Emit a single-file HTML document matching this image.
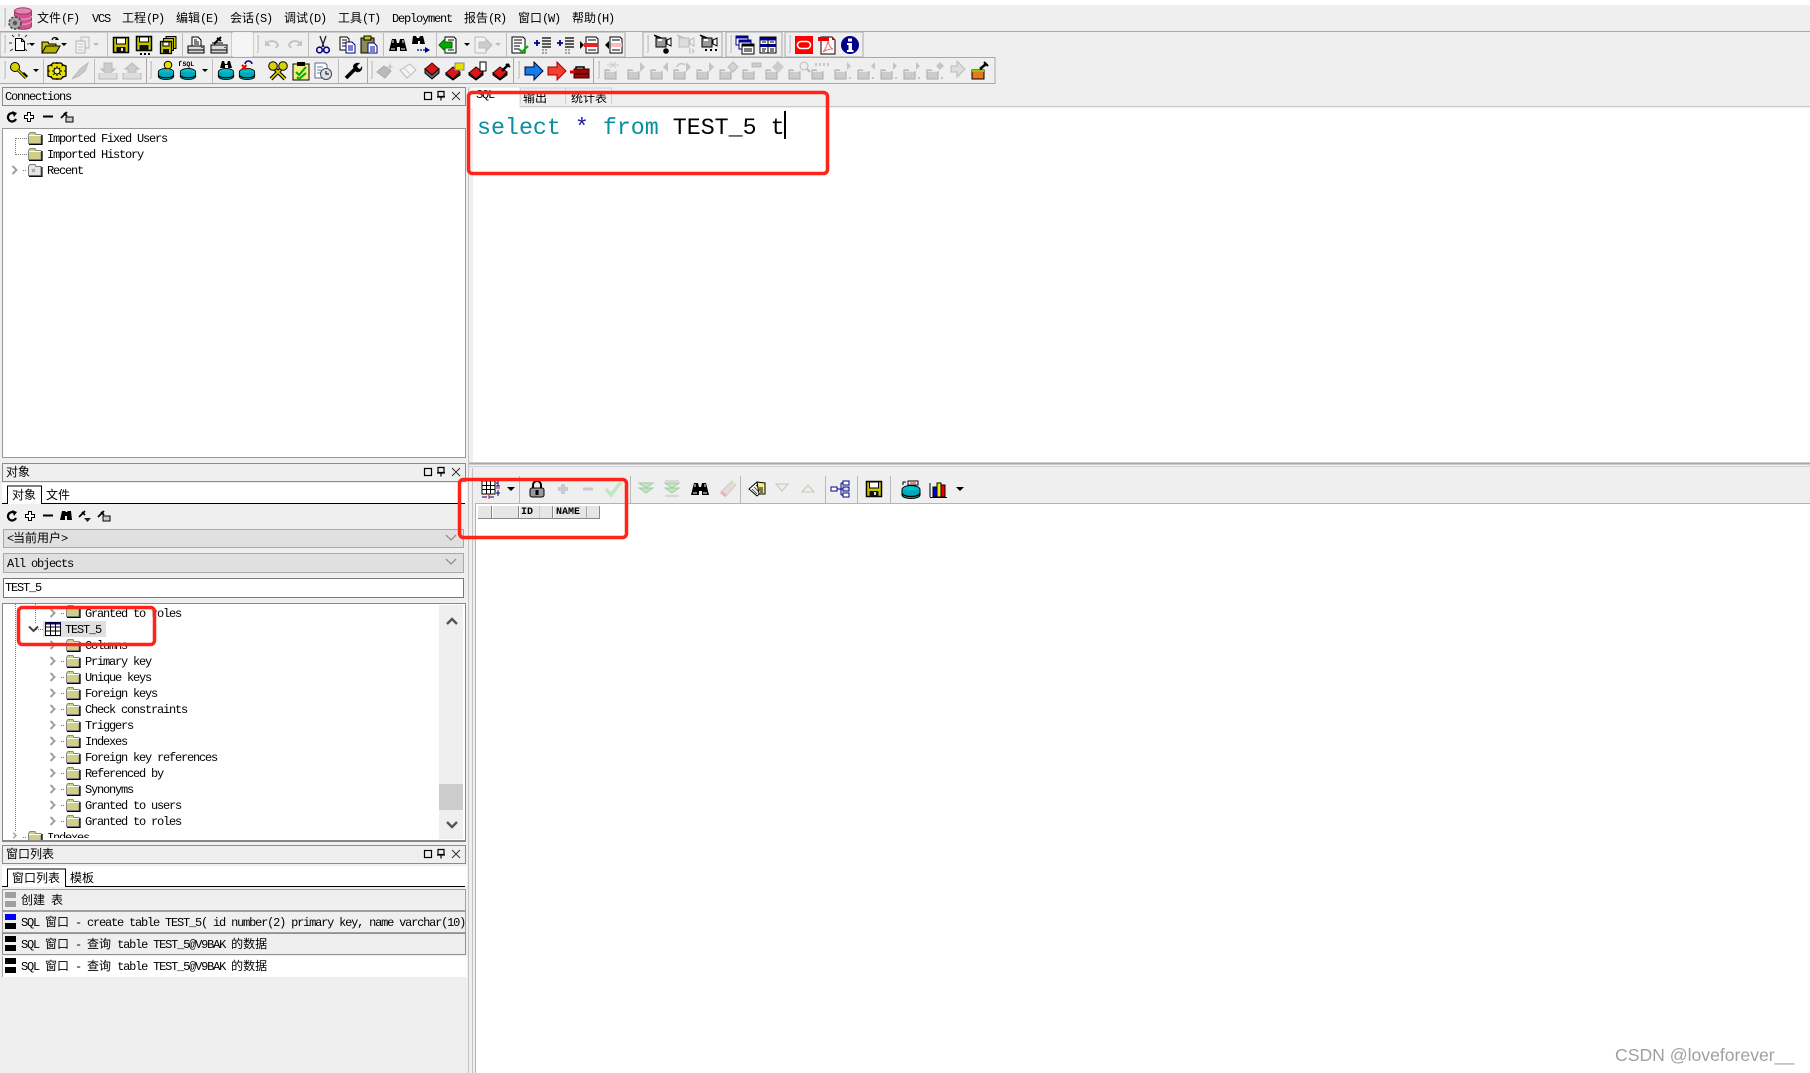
<!DOCTYPE html>
<html lang="zh"><head><meta charset="utf-8"><title>PL/SQL Developer</title>
<style>
html,body{margin:0;padding:0;background:#efefef}
#p{position:relative;width:1810px;height:1073px;overflow:hidden;background:#efefef}
svg.l{position:absolute;left:0;top:0}
.t{position:absolute;font:12px/14px "Liberation Mono","WenQuanYi Zen Hei",monospace;letter-spacing:-1.2px;white-space:pre;color:#000}
.t i{font-style:normal;letter-spacing:0}
#clip1{position:absolute;left:3px;top:604px;width:436px;height:234px;overflow:hidden}
#clip1 .t{margin-left:-3px;margin-top:-604px}
#ed{position:absolute;left:477px;top:113px;font:23.3px/30px "Liberation Mono",monospace;white-space:pre;color:#000}
#wm{position:absolute;left:1615px;top:1044px;font:17.6px/22px "Liberation Sans",sans-serif;color:#a0a0a0;white-space:pre}
</style></head><body><div id="p">
<svg class="l" width="1810" height="1073" viewBox="0 0 1810 1073" xmlns="http://www.w3.org/2000/svg">
<defs>
<symbol id="fo" viewBox="0 0 16 14"><path d="M1.500 3.500L3 1.500H8L9 3.500H14V12.500H1.500z" fill="#cfcf88" stroke="#888"/><path d="M2 4.500H14" stroke="#fff"/><path d="M15 4V13.500H2" fill="none" stroke="#000" stroke-width="1.300"/></symbol>
<symbol id="fr" viewBox="0 0 16 14"><path d="M1.500 3.500L3 1.500H8L9 3.500H14V12.500H1.500z" fill="#e6e6e6" stroke="#777"/><path d="M15 4V13.500H2" fill="none" stroke="#111" stroke-width="1.200"/><path d="M5 6l3 3M8 6l-3 3" stroke="#999"/></symbol>
<symbol id="ch" viewBox="0 0 10 10"><path d="M2.500 1l4 4-4 4" fill="none" stroke="#a0a0a0" stroke-width="2"/></symbol>
<symbol id="new" viewBox="0 0 20 20"><path d="M6.500 4.500h6l3 3v9h-9z" fill="#fff" stroke="#000"/><path d="M12.500 4.500v3h3" fill="none" stroke="#000"/><path d="M3 1l2 2M10 0v2.500M18 1l-2 2M0 9h3M1 17l3-2M18 10h2M18 17l-2-2" stroke="#333"/></symbol>
<symbol id="open" viewBox="0 0 20 20"><path d="M1 7h6l1 2h7v9H1z" fill="#c8c400" stroke="#000"/><path d="M1 18l4-7h14l-4 7z" fill="#b6b000" stroke="#000"/><path d="M11 5c1-3 4-3 5-1" fill="none" stroke="#000" stroke-width="1.300"/><path d="M14 5h4l-2-3z" fill="#000"/></symbol>
<symbol id="dcg" viewBox="0 0 20 20"><path d="M8 2h8v11H8z" fill="#eee" stroke="#bbb"/><path d="M3 6h9v12H3z" fill="#f2f2f2" stroke="#b4b4b4"/><path d="M5 9h5M5 12h5M5 15h5" stroke="#c4c4c4"/></symbol>
<symbol id="save" viewBox="0 0 20 20"><rect x="2.500" y="2.500" width="15" height="15" fill="#c8c400" stroke="#000" stroke-width="1.500"/><rect x="5.500" y="3" width="9" height="6" fill="#fff" stroke="#000"/><rect x="5.500" y="12" width="9" height="5.500" fill="#111"/><rect x="10" y="13" width="2" height="3" fill="#ddd"/></symbol>
<symbol id="saved" viewBox="0 0 20 20"><rect x="2.500" y="1.500" width="15" height="14" fill="#c8c400" stroke="#000" stroke-width="1.500"/><rect x="5.500" y="2" width="9" height="5" fill="#fff" stroke="#000"/><rect x="5.500" y="10" width="9" height="5.500" fill="#111"/><path d="M6 18h2v2H6zM10 18h2v2h-2zM14 18h2v2h-2z" fill="#000"/></symbol>
<symbol id="savea" viewBox="0 0 20 20"><rect x="8" y="1.500" width="10" height="12" fill="#c8c400" stroke="#000"/><rect x="5.500" y="3.500" width="10" height="12" fill="#c8c400" stroke="#000"/><rect x="2.500" y="6.500" width="11" height="12" fill="#c8c400" stroke="#000" stroke-width="1.300"/><rect x="5" y="7" width="6" height="4" fill="#fff" stroke="#000"/><rect x="5" y="14" width="6" height="4.500" fill="#111"/></symbol>
<symbol id="pr" viewBox="0 0 20 20"><path d="M6 2h6l3 3v6H6z" fill="#fff" stroke="#000"/><path d="M8 5h3M8 7h5M8 9h5" stroke="#000"/><path d="M2 11h16v7H2z" fill="#d8d8d8" stroke="#000"/><path d="M2 15h16" stroke="#000"/><path d="M15 12.500h2" stroke="#d22"/></symbol>
<symbol id="pr2" viewBox="0 0 20 20"><path d="M5 9l7-7M8 3l4 3" stroke="#000" stroke-width="2"/><path d="M2 10h16v8H2z" fill="#d8d8d8" stroke="#000"/><path d="M2 15h16" stroke="#000"/><path d="M15 12.500h2" stroke="#d22"/><path d="M3 8h11" stroke="#000"/></symbol>
<symbol id="undo" viewBox="0 0 20 20"><path d="M4 9c3-4 10-4 12 1l-2 3" fill="none" stroke="#c4c4c4" stroke-width="2"/><path d="M3 5v6h6z" fill="#c4c4c4"/></symbol>
<symbol id="redo" viewBox="0 0 20 20"><path d="M16 9c-3-4-10-4-12 1l2 3" fill="none" stroke="#c4c4c4" stroke-width="2"/><path d="M17 5v6h-6z" fill="#c4c4c4"/></symbol>
<symbol id="cut" viewBox="0 0 20 20"><path d="M7 1l4 11M13 1L9 12" stroke="#222" stroke-width="1.300"/><circle cx="6.500" cy="15" r="2.800" fill="none" stroke="#008" stroke-width="1.600"/><circle cx="13.500" cy="15" r="2.800" fill="none" stroke="#008" stroke-width="1.600"/></symbol>
<symbol id="copy" viewBox="0 0 20 20"><path d="M3 2h7l2 2v11H3z" fill="#fff" stroke="#000"/><path d="M5 5h5M5 8h5M5 11h5" stroke="#000"/><path d="M9 7h6l3 3v8H9z" fill="#fff" stroke="#008"/><path d="M11 11h5M11 13h5M11 15h5" stroke="#008"/></symbol>
<symbol id="paste" viewBox="0 0 20 20"><rect x="2" y="3" width="13" height="15" fill="#8a8a5a" stroke="#000"/><rect x="5" y="1" width="7" height="4" fill="#c8c800" stroke="#000"/><path d="M9 8h6l3 3v7H9z" fill="#fff" stroke="#008"/><path d="M11 12h5M11 14h5M11 16h5" stroke="#008"/></symbol>
<symbol id="bino" viewBox="0 0 20 20"><path d="M4 4h4l1 4h2l1-4h4l3 12h-7v-4H9v4H1z" fill="#000"/><path d="M3 14h4M13 14h4M5 5v3M15 5v3" stroke="#fff"/></symbol>
<symbol id="findn" viewBox="0 0 20 20"><path d="M2 1h3l1 2h2l1-2h3l2 8H9V6H7v3H1z" fill="#000"/><path d="M6 15h9" stroke="#008" stroke-dasharray="2 1" stroke-width="1.300"/><path d="M14 12l5 3-5 3z" fill="#008"/></symbol>
<symbol id="back" viewBox="0 0 20 20"><path d="M7 2h9l2 2v14H7z" fill="#fff" stroke="#000"/><path d="M10 5h6M10 15h6" stroke="#000"/><path d="M1 10l6-6v3h7v6H7v3z" fill="#0a0" stroke="#060"/></symbol>
<symbol id="fwd" viewBox="0 0 20 20"><path d="M2 2h9l2 2v14H2z" fill="#f2f2f2" stroke="#bbb"/><path d="M19 10l-6-6v3H6v6h7v3z" fill="#ccc" stroke="#bbb"/></symbol>
<symbol id="dchk" viewBox="0 0 20 20"><path d="M3 2h11l2 2v14H3z" fill="#fff" stroke="#000"/><path d="M5 5h8M5 8h8M5 11h6M5 14h5" stroke="#000"/><path d="M10 14l3 3 6-6" fill="none" stroke="#0a0" stroke-width="2"/></symbol>
<symbol id="ind" viewBox="0 0 20 20"><path d="M9 3h9M9 6h9M9 9h9M9 12h9" stroke="#000" stroke-width="1.300"/><path d="M9 15h6M9 18h6" stroke="#555" stroke-dasharray="2 1"/><path d="M1 8h6M4 5v6" stroke="#008" stroke-width="1.800"/></symbol>
<symbol id="remb" viewBox="0 0 20 20"><path d="M6 2h10l2 2v14H6z" fill="#fff" stroke="#000"/><path d="M8 5h8M8 15h8" stroke="#000"/><rect x="4" y="8" width="14" height="4" fill="#e22"/><path d="M0 6l4 4-4 4z" fill="#000"/></symbol>
<symbol id="rema" viewBox="0 0 20 20"><path d="M6 2h10l2 2v14H6z" fill="#fff" stroke="#000"/><path d="M8 5h8M8 15h8" stroke="#000"/><rect x="7" y="8" width="11" height="4" fill="#fbb"/><path d="M5 6l-4 4 4 4z" fill="#000"/></symbol>
<symbol id="cam" viewBox="0 0 20 20"><path d="M2 1l8 3-1 3z" fill="#666" stroke="#000"/><rect x="4" y="4" width="10" height="9" fill="#999" stroke="#000"/><path d="M6 6h4" stroke="#fff" stroke-width="2"/><path d="M15 6l4-2v8l-4-2z" fill="#fff" stroke="#000"/></symbol>
<symbol id="camg" viewBox="0 0 20 20"><path d="M2 1l8 3-1 3z" fill="#ddd" stroke="#bbb"/><rect x="4" y="4" width="10" height="9" fill="#ddd" stroke="#bbb"/><path d="M15 6l4-2v8l-4-2z" fill="#eee" stroke="#bbb"/></symbol>
<symbol id="win" viewBox="0 0 20 20"><rect x="1" y="1" width="12" height="9" fill="#fff" stroke="#008"/><path d="M1 2.500h12" stroke="#008" stroke-width="2"/><rect x="4" y="5" width="12" height="9" fill="#fff" stroke="#008"/><path d="M4 6.500h12" stroke="#008" stroke-width="2"/><rect x="7" y="9" width="12" height="10" fill="#fff" stroke="#000"/><path d="M7 10.500h12" stroke="#000" stroke-width="2"/><path d="M9 14h8M9 16h8" stroke="#000"/></symbol>
<symbol id="win2" viewBox="0 0 20 20"><rect x="2" y="2" width="16" height="16" fill="#fff" stroke="#000"/><path d="M2 4h16M2 10.500h16" stroke="#008" stroke-width="3"/><path d="M10 2v16" stroke="#000"/><path d="M4 7h4M12 7h4M4 14h4M12 14h4M4 16h3M12 16h4" stroke="#000"/></symbol>
<symbol id="ora" viewBox="0 0 20 20"><rect x="1" y="1" width="18" height="18" fill="#f00"/><rect x="3.500" y="6.500" width="13" height="7" rx="3.500" fill="none" stroke="#fff" stroke-width="1.600"/></symbol>
<symbol id="pdf" viewBox="0 0 20 20"><path d="M4 2h11l3 3v14H4z" fill="#fff" stroke="#000"/><path d="M1 2h11v4H1z" fill="#e00"/><path d="M15 2l3 3h-3z" fill="#e00"/><path d="M11 6c-1 5-3 9-5 11 3-2 7-3 10-3-3-1-4-4-5-8z" fill="none" stroke="#e66"/></symbol>
<symbol id="inf" viewBox="0 0 20 20"><circle cx="10" cy="10" r="9" fill="#008"/><rect x="8" y="3.500" width="4" height="3" fill="#fff"/><path d="M7 8h5v7h1.500v2h-6.500v-2h1.500v-5H7z" fill="#fff"/></symbol>
<symbol id="key" viewBox="0 0 20 20"><circle cx="6" cy="6" r="4.500" fill="#d8d000" stroke="#000"/><path d="M9 9l8 8M14 14l2-2M16 16l2-2" stroke="#000" stroke-width="3"/><path d="M9 9l8 8" stroke="#d8d000" stroke-width="1.300"/></symbol>
<symbol id="gear" viewBox="0 0 20 20"><path d="M6 2h8l2 2 3 1v10l-3 1-2 2H6l-2-2-3-1V5l3-1z" fill="#e8e000" stroke="#000" stroke-width="1.300"/><path d="M4 4l12 12M16 4L4 16M10 1v18M1 10h18" stroke="#000" stroke-dasharray="2 2"/><circle cx="10" cy="10" r="3" fill="#f4f4a0" stroke="#000"/></symbol>
<symbol id="fea" viewBox="0 0 20 20"><path d="M2 18L10 8l8-6-3 8-6 5z" fill="#c8c8c8" stroke="#bbb"/></symbol>
<symbol id="dl" viewBox="0 0 20 20"><path d="M6 2h8v6h3l-7 6-7-6h3z" fill="#ccc" stroke="#b8b8b8"/><path d="M1 12v6h18v-6" fill="#ddd" stroke="#bbb"/></symbol>
<symbol id="ul" viewBox="0 0 20 20"><path d="M10 2l7 6h-3v5H6V8H3z" fill="#ccc" stroke="#b8b8b8"/><path d="M1 12v6h18v-6" fill="#ddd" stroke="#bbb"/></symbol>
<symbol id="db" viewBox="0 0 20 14"><ellipse cx="10" cy="4.500" rx="9" ry="4" fill="#00c0d0" stroke="#000"/><path d="M1 5v5c0 2 4 3.500 9 3.500s9-1.500 9-3.500V5" fill="#00a8b8" stroke="#000"/><path d="M1 8c0 2 4 3.500 9 3.500S19 10 19 8" fill="none" stroke="#000" stroke-width="1.300"/></symbol>
<symbol id="bul" viewBox="0 0 20 20"><use href="#db" x="1.500" y="8" width="17" height="12"/><circle cx="12" cy="5" r="3.800" fill="#e8e000" stroke="#000"/><rect x="10.500" y="9" width="3" height="3" fill="#888"/></symbol>
<symbol id="dsql" viewBox="0 0 20 20"><use href="#db" x="1.500" y="8" width="17" height="12"/><text x="4.500" y="6" font-family="Liberation Mono" font-size="6.500" font-weight="bold">SQL</text><path d="M1.500 6V2l2-1" fill="none" stroke="#000"/></symbol>
<symbol id="dbin" viewBox="0 0 20 20"><use href="#db" x="1.500" y="8" width="17" height="12"/><path d="M6 1h2l1 3h2l1-3h2l2 7h-4V5H9v3H4z" fill="#000"/></symbol>
<symbol id="dx" viewBox="0 0 20 20"><use href="#db" x="1.500" y="8" width="17" height="12"/><path d="M8 4c1-4 6-4 7 0" fill="none" stroke="#008" stroke-width="1.500"/><path d="M5 5l4.500 4.500M9.500 5L5 9.500" stroke="#e00" stroke-width="2"/></symbol>
<symbol id="keys" viewBox="0 0 20 20"><path d="M7 8l10 10M13 8L3 18" stroke="#000" stroke-width="4"/><path d="M7 8l10 10M13 8L3 18" stroke="#d8d000" stroke-width="1.800"/><circle cx="5" cy="5" r="4.300" fill="#d8d000" stroke="#000"/><circle cx="15" cy="5" r="4.300" fill="#d8d000" stroke="#000"/></symbol>
<symbol id="chk" viewBox="0 0 20 20"><rect x="2" y="3" width="16" height="16" fill="#f0f080" stroke="#000"/><rect x="6" y="1" width="8" height="4" fill="#000"/><path d="M5 11l3 3 7-8M6 16l2 2 7-6" fill="none" stroke="#0a0" stroke-width="2"/></symbol>
<symbol id="clk" viewBox="0 0 20 20"><path d="M2 2h10l2 2v13H2z" fill="#fff" stroke="#668"/><path d="M4 6h6M4 9h4M4 12h4" stroke="#48b"/><circle cx="13" cy="13" r="5.500" fill="#dde" stroke="#444"/><path d="M13 10v3h3" fill="none" stroke="#000"/></symbol>
<symbol id="wr" viewBox="0 0 20 20"><path d="M3 17l9-9" stroke="#000" stroke-width="3.600"/><path d="M10 6c0-3 3-5 7-4l-3 3 1 2 2 1 2-3c1 4-2 7-6 6z" fill="#000"/></symbol>
<symbol id="gem" viewBox="0 0 20 20"><path d="M2 11l7-6 7 5-6 7z" fill="#bbb" stroke="#aaa"/><path d="M14 5l1-4 1 4 3 1-3 1-1 2-1-2-3-1z" fill="#ccc"/></symbol>
<symbol id="bk" viewBox="0 0 20 20"><path d="M2 9l10-6 6 6-9 8z" fill="#f4f4f4" stroke="#bbb"/><path d="M6 7l6 6" stroke="#ccc"/></symbol>
<symbol id="rb" viewBox="0 0 20 20"><path d="M3 8l7-6 7 6-7 6z" fill="#d81818" stroke="#400"/><path d="M3 8v4l7 6 7-6V8l-7 6z" fill="#666" stroke="#000"/></symbol>
<symbol id="rby" viewBox="0 0 20 20"><path d="M1 12l7-6 7 5-7 7z" fill="#d81818" stroke="#400"/><path d="M1 12v2l7 5 7-5v-2l-7 6z" fill="#666" stroke="#000"/><rect x="10" y="2" width="9" height="7" fill="#e8e000" stroke="#888"/></symbol>
<symbol id="rbd" viewBox="0 0 20 20"><path d="M1 12l7-6 7 5-7 7z" fill="#d81818" stroke="#400"/><path d="M1 12v2l7 5 7-5v-2l-7 6z" fill="#666" stroke="#000"/><rect x="12" y="1" width="6" height="9" fill="#fff" stroke="#000"/></symbol>
<symbol id="rbw" viewBox="0 0 20 20"><path d="M1 12l7-6 7 5-7 7z" fill="#d81818" stroke="#400"/><path d="M1 12v2l7 5 7-5v-2l-7 6z" fill="#666" stroke="#000"/><path d="M10 10l7-7" stroke="#000" stroke-width="2.500"/><path d="M14 3l4 3" stroke="#000" stroke-width="2"/></symbol>
<symbol id="bl" viewBox="0 0 20 20"><path d="M1 6h9V1l9 9-9 9v-5H1z" fill="#1080e8" stroke="#004"/></symbol>
<symbol id="rd" viewBox="0 0 20 20"><path d="M1 6h9V1l9 9-9 9v-5H1z" fill="#f04030" stroke="#a00"/></symbol>
<symbol id="cs" viewBox="0 0 20 20"><path d="M6 9V6h8v3" fill="none" stroke="#000" stroke-width="1.500"/><rect x="4" y="8" width="15" height="9" fill="#a00808" stroke="#300"/><path d="M0 11h6" stroke="#c00" stroke-width="3"/><path d="M4 13h15" stroke="#300"/></symbol>
<symbol id="gf" viewBox="0 0 20 20"><path d="M2 9h4l1 1.500h6V18H2z" fill="#ccc" stroke="#aaa"/><path d="M2.500 10.500h10" stroke="#e8e8e8"/></symbol>
<symbol id="of" viewBox="0 0 20 20"><rect x="2" y="9" width="12" height="9" fill="#e87820" stroke="#000"/><path d="M2 10h12" stroke="#8c0" stroke-width="2"/><path d="M10 8l6-5" stroke="#000" stroke-width="2.500"/><path d="M14 1l4 4" stroke="#000" stroke-width="2"/></symbol>
<symbol id="ref" viewBox="0 0 12 12"><path d="M10 8A4.200 4.200 0 1 1 8 2.500" fill="none" stroke="#000" stroke-width="2.200"/><path d="M6 0l5 2-3 4z" fill="#000"/></symbol>
<symbol id="pl" viewBox="0 0 12 12"><path d="M4.500 1.500h3v3h3v3h-3v3h-3v-3h-3v-3h3z" fill="#fff" stroke="#000"/></symbol>
<symbol id="mi" viewBox="0 0 12 12"><path d="M1 5.500h10" stroke="#000" stroke-width="2"/></symbol>
<symbol id="fb" viewBox="0 0 12 12"><path d="M2 1h3l1 1h1l1-1h3l1 9H7V6H5v4H0z" fill="#000"/></symbol>
<symbol id="tl" viewBox="0 0 14 12"><path d="M1 7l6-6M4 2l3 3" stroke="#000" stroke-width="1.800"/><path d="M6 8h7l-3.500 4z" fill="#222"/></symbol>
<symbol id="tb" viewBox="0 0 14 12"><path d="M1 7l6-6M4 2l3 3" stroke="#000" stroke-width="1.800"/><rect x="6" y="6" width="7" height="5" fill="#ccc" stroke="#000"/></symbol>
<symbol id="pan" viewBox="0 0 40 12"><rect x="1.500" y="2.500" width="7" height="7" fill="none" stroke="#000" stroke-width="1.200"/><path d="M15 1.500h6v5h-6zM18 6.500v4M14 7h8" fill="none" stroke="#000" stroke-width="1.200"/><path d="M29 2l8 8M37 2l-8 8" stroke="#333"/></symbol>
<symbol id="hd" viewBox="0 0 4 20"><path d="M1.500 1l1.500 0M2 1v17M2 18H.5" fill="none" stroke="#a8a8a8"/><path d="M1 2v16" stroke="#fff"/></symbol>
<symbol id="grd" viewBox="0 0 20 20"><rect x="1" y="2" width="13" height="13" fill="#fff" stroke="#000"/><path d="M1 6.500h13M1 10.500h13M5.500 2v13M9.500 2v13" stroke="#000"/><path d="M15 4l2 0M17 1v6M17 11v6M15 7h4M15 14h4" stroke="#008"/><path d="M1 18h5M8 18h5" stroke="#008"/><path d="M8 15v5M15 9h4" stroke="#e00"/></symbol>
<symbol id="lk" viewBox="0 0 20 20"><path d="M6 9V6a4 4 0 0 1 8 0v3" fill="none" stroke="#000" stroke-width="2"/><rect x="3" y="9" width="14" height="9" rx="2" fill="#999" stroke="#000"/><rect x="8.500" y="11" width="3" height="5" fill="#000"/></symbol>
<symbol id="tdn" viewBox="0 0 20 20"><path d="M3 4l7 5 7-5z" fill="#bfe8bf" stroke="#a8c8a8"/><path d="M3 9l7 5 7-5z" fill="#bfe8bf" stroke="#a8c8a8"/></symbol>
<symbol id="tde" viewBox="0 0 20 20"><path d="M3 2h14" stroke="#b0c8b0"/><path d="M3 4l7 5 7-5z" fill="#bfe8bf" stroke="#a8c8a8"/><path d="M3 9l7 5 7-5z" fill="#bfe8bf" stroke="#a8c8a8"/><path d="M3 17h14" stroke="#b0c8b0"/></symbol>
<symbol id="ers" viewBox="0 0 20 20"><path d="M3 13L14 2l4 4L8 17z" fill="#e8d8e0" stroke="#ccc"/><path d="M3 13l5 4" stroke="#f0b0c0" stroke-width="3"/><path d="M14 3l3 3" stroke="#d8e8b0" stroke-width="2"/></symbol>
<symbol id="nt" viewBox="0 0 20 20"><path d="M2 10L10 3l8 7-8 7z" fill="#fff" stroke="#000"/><path d="M5 10l5 5M7 8l5 5M9 6l5 5" stroke="#555"/><path d="M10 3l8 1v11h-6z" fill="#f0f080" stroke="#000"/><path d="M12 9h4M12 11h4M13 13h3" stroke="#000"/></symbol>
<symbol id="tree" viewBox="0 0 20 20"><path d="M7 10h4M11 4v12M11 4h2M11 10h2M11 16h2" stroke="#008" fill="none"/><rect x="1" y="8" width="6" height="4" fill="#fff" stroke="#008"/><rect x="13" y="2" width="6" height="4" fill="#fff" stroke="#008"/><rect x="13" y="8" width="6" height="4" fill="#ddd" stroke="#008"/><rect x="13" y="14" width="6" height="4" fill="#fff" stroke="#008"/></symbol>
<symbol id="dbp" viewBox="0 0 20 20"><use href="#db" x="0" y="6" width="20" height="14"/><rect x="7" y="2" width="10" height="4" fill="#fff" stroke="#000"/><path d="M9 4h6" stroke="#e00"/><path d="M2 6V3h3" fill="none" stroke="#000"/></symbol>
<symbol id="cht" viewBox="0 0 20 20"><path d="M1 18V4" stroke="#000"/><rect x="1" y="18" width="17" height="1" fill="#000"/><rect x="4" y="8" width="4" height="10" fill="#00c" stroke="#000"/><rect x="8" y="4" width="4" height="14" fill="#ee0" stroke="#000"/><rect x="12" y="6" width="4" height="12" fill="#e00" stroke="#000"/></symbol>
<symbol id="lg" viewBox="0 0 24 23"><ellipse cx="15" cy="4" rx="8.500" ry="3.300" fill="#e884ac" stroke="#a03c70"/><path d="M6.500 4v15c0 2 3.500 3.300 8.500 3.300s8.500-1.300 8.500-3.300V4c0 2-3.500 3.300-8.500 3.300S6.500 6 6.500 4z" fill="#d0558e" stroke="#a03c70"/><path d="M6.500 9c0 2 3.500 3.300 8.500 3.300S23.500 11 23.500 9M6.500 14c0 2 3.500 3.300 8.500 3.300s8.500-1.300 8.500-3.300" fill="none" stroke="#f0a0c4"/><circle cx="7" cy="16" r="6" fill="#a8a8a8" stroke="#444" stroke-width="1.500" stroke-dasharray="2.500 1.500"/><circle cx="7" cy="16" r="2.200" fill="#555"/></symbol>
</defs>

<!-- base -->
<rect width="1810" height="5" fill="#fff"/>
<rect y="5" width="1810" height="1068" fill="#efefef"/>
<path d="M0 31.500H1810" stroke="#a8a8a8"/>
<use href="#hd" x="3" y="7" width="4" height="22"/>
<use href="#lg" x="8" y="7" width="24" height="23"/>

<!-- toolbars -->
<path d="M0 32h232v25H0z M253 32h372v25H253z M643 32h79v25h-79z M726 32h56v25h-56z M785 32h78v25h-78z" fill="#efefef" stroke="#a8a8a8"/>
<path d="M0 57.500H995M0 83.500H995M995 57v27M146.500 58v25M367.500 58v25M513.500 58v25M593.500 58v25" stroke="#a8a8a8" fill="none"/>
<path d="M232 33h21v23h-21z" fill="#f5f5f5"/>
<path d="M107.500 33v24M182.500 33v24M308.500 33v24M383.500 33v24M436.500 33v24M506.500 33v24M43.500 59v24M94.500 59v24M212.500 59v24M338.500 59v24" stroke="#bdbdbd"/>
<g>
<use href="#hd" x="3" y="35" width="4" height="19"/><use href="#hd" x="256" y="35" width="4" height="19"/><use href="#hd" x="646" y="35" width="4" height="19"/><use href="#hd" x="729" y="35" width="4" height="19"/><use href="#hd" x="788" y="35" width="4" height="19"/>
<use href="#hd" x="3" y="61" width="4" height="19"/><use href="#hd" x="149" y="61" width="4" height="19"/><use href="#hd" x="370" y="61" width="4" height="19"/><use href="#hd" x="517" y="61" width="4" height="19"/><use href="#hd" x="597" y="61" width="4" height="19"/>
</g>
<!-- row1 -->
<g>
<use href="#new" x="9" y="34" width="20" height="20"/>
<use href="#open" x="41" y="35" width="20" height="20"/>
<use href="#dcg" x="73" y="35" width="20" height="20"/>
<use href="#save" x="111" y="35" width="20" height="20"/>
<use href="#saved" x="134" y="35" width="20" height="20"/>
<use href="#savea" x="158" y="35" width="20" height="20"/>
<use href="#pr" x="186" y="35" width="20" height="20"/>
<use href="#pr2" x="209" y="35" width="20" height="20"/>
<use href="#undo" x="262" y="35" width="20" height="20"/>
<use href="#redo" x="285" y="35" width="20" height="20"/>
<use href="#cut" x="313" y="35" width="20" height="20"/>
<use href="#copy" x="337" y="35" width="20" height="20"/>
<use href="#paste" x="359" y="35" width="20" height="20"/>
<use href="#bino" x="388" y="35" width="20" height="20"/>
<use href="#findn" x="411" y="35" width="20" height="20"/>
<use href="#back" x="438" y="35" width="20" height="20"/>
<use href="#fwd" x="473" y="35" width="20" height="20"/>
<use href="#dchk" x="509" y="35" width="20" height="20"/>
<use href="#ind" x="533" y="35" width="20" height="20"/>
<use href="#ind" x="556" y="35" width="20" height="20"/>
<use href="#remb" x="580" y="35" width="20" height="20"/>
<use href="#rema" x="604" y="35" width="20" height="20"/>
<use href="#cam" x="652" y="34" width="20" height="20"/><circle cx="666" cy="51" r="2.800" fill="#000"/>
<use href="#camg" x="675" y="34" width="20" height="20"/><path d="M689 48h1.500v6H689zM692 48l3 3-3 3z" fill="#ccc"/>
<use href="#cam" x="698" y="34" width="20" height="20"/><path d="M705 49h2v2h-2zM710 49h2v2h-2zM715 49h2v2h-2z" fill="#000"/>
<use href="#win" x="735" y="35" width="20" height="20"/>
<use href="#win2" x="758" y="35" width="20" height="20"/>
<use href="#ora" x="794" y="35" width="20" height="20"/>
<use href="#pdf" x="817" y="35" width="20" height="20"/>
<use href="#inf" x="840" y="35" width="20" height="20"/>
<g fill="#000"><path d="M29 43h6l-3 3zM61 43h6l-3 3zM464 43h6l-3 3z"/><path d="M93 43h6l-3 3zM495 43h6l-3 3z" fill="#bbb"/></g>
</g>
<!-- row2 -->
<g>
<use href="#key" x="9" y="61" width="20" height="20"/>
<use href="#gear" x="47" y="61" width="20" height="20"/>
<use href="#fea" x="70" y="61" width="20" height="20"/>
<use href="#dl" x="98" y="61" width="20" height="20"/>
<use href="#ul" x="122" y="61" width="20" height="20"/>
<use href="#bul" x="156" y="60" width="20" height="20"/>
<use href="#dsql" x="178" y="60" width="20" height="20"/>
<use href="#dbin" x="216" y="60" width="20" height="20"/>
<use href="#dx" x="237" y="60" width="20" height="20"/>
<use href="#keys" x="268" y="61" width="20" height="20"/>
<use href="#chk" x="291" y="61" width="20" height="20"/>
<use href="#clk" x="313" y="61" width="20" height="20"/>
<use href="#wr" x="343" y="61" width="20" height="20"/>
<use href="#gem" x="375" y="61" width="20" height="20"/>
<use href="#bk" x="398" y="61" width="20" height="20"/>
<use href="#rb" x="422" y="61" width="20" height="20"/>
<use href="#rby" x="445" y="61" width="20" height="20"/>
<use href="#rbd" x="468" y="61" width="20" height="20"/>
<use href="#rbw" x="492" y="61" width="20" height="20"/>
<use href="#bl" x="524" y="61" width="20" height="20"/>
<use href="#rd" x="547" y="61" width="20" height="20"/>
<use href="#cs" x="570" y="61" width="20" height="20"/>
<g fill="#000"><path d="M33 69h6l-3 3zM202 69h6l-3 3z"/></g>
<use href="#gf" x="603" y="61" width="20" height="20"/><path d="M610 62l3 3 3-3M610 68l3-3 3 3M607 65h12" stroke="#ccc" fill="none"/>
<use href="#gf" x="626" y="61" width="20" height="20"/><path d="M640 62l5 5-5 5z" fill="#c4c4c4"/>
<use href="#gf" x="649" y="61" width="20" height="20"/><path d="M668 62l-5 5 5 5z" fill="#c4c4c4"/>
<use href="#gf" x="672" y="61" width="20" height="20"/><path d="M677 67c1-4 6-4 8-2" fill="none" stroke="#c4c4c4" stroke-width="1.500"/><path d="M686 62l5 5-5 5z" fill="#c4c4c4"/>
<use href="#gf" x="695" y="61" width="20" height="20"/><path d="M709 62l5 5-5 5z" fill="#c4c4c4"/>
<use href="#gf" x="718" y="61" width="20" height="20"/><path d="M733 62l5 5-5 5-5-5z" fill="#d4d4d4" stroke="#bbb"/>
<use href="#gf" x="741" y="61" width="20" height="20"/><rect x="752" y="63" width="9" height="4" fill="#ccc" stroke="#bbb"/>
<use href="#gf" x="764" y="61" width="20" height="20"/><path d="M778 61l6 6-6 6-6-6z" fill="#ccc"/>
<use href="#gf" x="787" y="61" width="20" height="20"/><circle cx="804" cy="66" r="4" fill="#eee" stroke="#bbb"/><path d="M807 69l3 3" stroke="#bbb" stroke-width="2"/>
<use href="#gf" x="810" y="61" width="20" height="20"/><path d="M815 63h2v3h-2zM819 63h2v3h-2zM823 63h2v3h-2zM827 63h2v3h-2z" fill="#c8c8c8"/>
<use href="#gf" x="833" y="61" width="20" height="20"/><path d="M847 62l4 4-4 4zM841 77h2v2h-2zM845 77h2v2h-2zM849 77h2v2h-2z" fill="#c4c4c4"/>
<use href="#gf" x="856" y="61" width="20" height="20"/><path d="M875 62l-4 4 4 4zM864 77h2v2h-2zM868 77h2v2h-2zM872 77h2v2h-2z" fill="#c4c4c4"/>
<use href="#gf" x="879" y="61" width="20" height="20"/><path d="M893 62l4 4-4 4zM887 77h2v2h-2zM891 77h2v2h-2zM895 77h2v2h-2z" fill="#c4c4c4"/>
<use href="#gf" x="902" y="61" width="20" height="20"/><path d="M916 62l4 4-4 4zM910 77h2v2h-2zM914 77h2v2h-2zM918 77h2v2h-2z" fill="#c4c4c4"/>
<use href="#gf" x="925" y="61" width="20" height="20"/><path d="M940 62l4 4-4 4-4-4zM933 77h2v2h-2zM937 77h2v2h-2zM941 77h2v2h-2z" fill="#c4c4c4"/>
<path d="M951 66h6V61l8 8-8 8v-5h-6z" fill="#ddd" stroke="#bbb"/>
<use href="#of" x="970" y="61" width="20" height="20"/>
</g>

<!-- Connections -->
<rect x="2.500" y="87.500" width="463" height="18" fill="#efefef" stroke="#8c8c8c"/>
<use href="#pan" x="423" y="90" width="40" height="12"/>
<g><use href="#ref" x="6" y="111" width="12" height="12"/><use href="#pl" x="23" y="111" width="12" height="12"/><use href="#mi" x="42" y="111" width="12" height="12"/><use href="#tb" x="60" y="111" width="14" height="12"/></g>
<rect x="2.500" y="128.500" width="463" height="329" fill="#fff" stroke="#999"/>
<path d="M15.500 138v17M16 138.500h11M16 154.500h11M23 170.500h4" stroke="#777" stroke-dasharray="1 1" fill="none"/>
<use href="#fo" x="27" y="131" width="16" height="14"/><use href="#fo" x="27" y="147" width="16" height="14"/><use href="#fr" x="27" y="163" width="16" height="14"/>
<use href="#ch" x="10" y="165" width="10" height="10"/>

<!-- Objects -->
<rect x="2.500" y="463.500" width="463" height="18" fill="#efefef" stroke="#8c8c8c"/>
<use href="#pan" x="423" y="466" width="40" height="12"/>
<rect x="2" y="483" width="465" height="20" fill="#fff"/>
<path d="M2 503.500H465M7.500 503v-17h34v17" stroke="#000" fill="none"/>
<rect x="8" y="487" width="33" height="17" fill="#fff"/>
<g><use href="#ref" x="6" y="510" width="12" height="12"/><use href="#pl" x="24" y="510" width="12" height="12"/><use href="#mi" x="42" y="510" width="12" height="12"/><use href="#fb" x="60" y="510" width="12" height="12"/><use href="#tl" x="78" y="510" width="14" height="12"/><use href="#tb" x="97" y="510" width="14" height="12"/></g>
<rect x="3.500" y="529.500" width="460" height="18" fill="#e0e0e0" stroke="#a8a8a8"/>
<rect x="3.500" y="553.500" width="460" height="19" fill="#e0e0e0" stroke="#a8a8a8"/>
<path d="M446 535l5 5 5-5M446 559l5 5 5-5" fill="none" stroke="#888" stroke-width="1.200"/>
<rect x="3.500" y="578.500" width="460" height="19" fill="#fff" stroke="#777"/>
<rect x="2.500" y="603.500" width="463" height="238" fill="#fff" stroke="#888"/>
<rect x="439" y="605" width="24" height="234" fill="#efefef"/>
<rect x="439" y="784" width="24" height="26" fill="#cdcdcd"/>
<path d="M447 624l5-5 5 5M447 822l5 5 5-5" fill="none" stroke="#555" stroke-width="2.400"/>
<path d="M15.500 604v228M35.500 604v20M36 629.500h7" stroke="#777" stroke-dasharray="1 1" fill="none"/>
<path d="M61 613.500h4M61 645.500h4M61 661.500h4M61 677.500h4M61 693.500h4M61 709.500h4M61 725.500h4M61 741.500h4M61 757.500h4M61 773.500h4M61 789.500h4M61 805.500h4M61 821.500h4M23 837.500h4" stroke="#777" stroke-dasharray="1 1"/>
<g>
<use href="#ch" x="48" y="608" width="10" height="10"/><use href="#ch" x="48" y="640" width="10" height="10"/><use href="#ch" x="48" y="656" width="10" height="10"/><use href="#ch" x="48" y="672" width="10" height="10"/><use href="#ch" x="48" y="688" width="10" height="10"/><use href="#ch" x="48" y="704" width="10" height="10"/><use href="#ch" x="48" y="720" width="10" height="10"/><use href="#ch" x="48" y="736" width="10" height="10"/><use href="#ch" x="48" y="752" width="10" height="10"/><use href="#ch" x="48" y="768" width="10" height="10"/><use href="#ch" x="48" y="784" width="10" height="10"/><use href="#ch" x="48" y="800" width="10" height="10"/><use href="#ch" x="48" y="816" width="10" height="10"/>
</g>
<path d="M29 626.500l4.500 4.500 4.500-4.500" fill="none" stroke="#444" stroke-width="2"/>
<rect x="43" y="621" width="63" height="16" fill="#e0e0e0"/>
<rect x="45.500" y="622.500" width="15" height="13" fill="#fff" stroke="#000"/><path d="M45 623.500h16" stroke="#008" stroke-width="2"/><path d="M45 627h16M45 631h16M50.500 623v13M55.500 623v13" stroke="#000"/>
<g>
<use href="#fo" x="65" y="604" width="16" height="14"/><use href="#fo" x="65" y="638" width="16" height="14"/><use href="#fo" x="65" y="654" width="16" height="14"/><use href="#fo" x="65" y="670" width="16" height="14"/><use href="#fo" x="65" y="686" width="16" height="14"/><use href="#fo" x="65" y="702" width="16" height="14"/><use href="#fo" x="65" y="718" width="16" height="14"/><use href="#fo" x="65" y="734" width="16" height="14"/><use href="#fo" x="65" y="750" width="16" height="14"/><use href="#fo" x="65" y="766" width="16" height="14"/><use href="#fo" x="65" y="782" width="16" height="14"/><use href="#fo" x="65" y="798" width="16" height="14"/><use href="#fo" x="65" y="814" width="16" height="14"/>
</g>
<use href="#ch" x="10" y="832" width="10" height="7"/>
<svg x="27" y="830" width="16" height="10" viewBox="0 0 16 10"><use href="#fo" x="0" y="0" width="16" height="14"/></svg>
<rect x="3" y="840" width="462" height="1" fill="#888"/>

<!-- Window list -->
<rect x="2.500" y="845.500" width="463" height="18" fill="#efefef" stroke="#8c8c8c"/>
<use href="#pan" x="423" y="848" width="40" height="12"/>
<rect x="2" y="866" width="465" height="20" fill="#fff"/>
<path d="M2 886.500H465M7.500 886v-17h58v17" stroke="#000" fill="none"/>
<rect x="8" y="870" width="57" height="17" fill="#fff"/>
<rect x="2.500" y="889.500" width="463" height="21" fill="#efefef" stroke="#a0a0a0"/>
<rect x="2.500" y="911.500" width="463" height="21" fill="#efefef" stroke="#a0a0a0"/>
<rect x="2.500" y="933.500" width="463" height="21" fill="#efefef" stroke="#909090"/>
<rect x="2" y="956" width="465" height="21" fill="#fff"/><path d="M2.500 956v21" stroke="#aaa"/>
<rect x="5" y="892" width="11" height="6" fill="#a0a0a0"/><rect x="5" y="901" width="11" height="6" fill="#a0a0a0"/>
<rect x="5" y="914" width="11" height="6" fill="#00f"/><rect x="5" y="923" width="11" height="6" fill="#000"/>
<rect x="5" y="936" width="11" height="6" fill="#000"/><rect x="5" y="945" width="11" height="6" fill="#000"/>
<rect x="5" y="958" width="11" height="6" fill="#000"/><rect x="5" y="967" width="11" height="6" fill="#000"/>

<!-- right -->
<path d="M468.500 87V1073M473.500 109V462M472.500 468V1073" stroke="#c4c4c4"/>
<path d="M469 106.500H1810" stroke="#c8c8c8"/>
<path d="M520.500 104V88H565.500V104M565.500 88H611.500V104" fill="none" stroke="#cfcfcf"/>
<rect x="470" y="87" width="50" height="22" fill="#fff" stroke="#ddd"/>
<rect x="473" y="108" width="1337" height="354" fill="#fff"/>
<path d="M469 463.500H1810" stroke="#a8a8a8" stroke-width="2"/><path d="M469 466.500H1810" stroke="#d4d4d4"/>
<rect x="476" y="504" width="1334" height="569" fill="#fff"/>
<path d="M475.500 503V1073M475 503.500H1810" stroke="#b4b4b4"/>
<path d="M519.500 476v27M630.500 476v27M740.500 476v27M825.500 476v27M857.500 476v27M890.500 476v27" stroke="#b8b8b8"/>
<g>
<use href="#grd" x="481" y="479" width="20" height="20"/>
<path d="M507 487h8l-4 4z" fill="#000"/>
<use href="#lk" x="527" y="479" width="20" height="20"/>
<path d="M561 484h4v3h3v4h-3v3h-4v-3h-3v-4h3z" fill="#c8c8d0"/>
<rect x="583" y="487.500" width="10" height="3" fill="#c8c8d0"/>
<path d="M606 489l5 6 10-13" fill="none" stroke="#bfe8bf" stroke-width="3.500"/>
<use href="#tdn" x="636" y="479" width="20" height="20"/>
<use href="#tde" x="662" y="479" width="20" height="20"/>
<use href="#bino" x="690" y="479" width="20" height="20"/>
<use href="#ers" x="718" y="479" width="20" height="20"/>
<use href="#nt" x="747" y="479" width="20" height="20"/>
<path d="M776 484h12l-6 7z" fill="#f0f0e0" stroke="#c4c4c4"/>
<path d="M802 492h12l-6-7z" fill="#f0f0e0" stroke="#c4c4c4"/>
<use href="#tree" x="830" y="479" width="20" height="20"/>
<use href="#save" x="864" y="479" width="20" height="20"/>
<use href="#dbp" x="901" y="479" width="20" height="20"/>
<use href="#cht" x="929" y="479" width="20" height="20"/>
<path d="M956 487h8l-4 4z" fill="#000"/>
</g>
<!-- grid header -->
<rect x="478" y="506" width="122" height="13" fill="#e6e6e6"/>
<path d="M478 518.500H600M599.500 506V519M491.500 506V519M518.500 506V519M552.500 506V519" stroke="#888" fill="none"/>
<path d="M492.500 506V518M519.500 506V518M553.500 506V518" stroke="#fff"/>
<path d="M539.500 506V518" stroke="#ccc"/><path d="M586.500 506V518" stroke="#aaa"/>
</svg>

<div class="t" style="left:37px;top:12px"><i>文件</i>(F)</div>
<div class="t" style="left:92px;top:12px">VCS</div>
<div class="t" style="left:122px;top:12px"><i>工程</i>(P)</div>
<div class="t" style="left:176px;top:12px"><i>编辑</i>(E)</div>
<div class="t" style="left:230px;top:12px"><i>会话</i>(S)</div>
<div class="t" style="left:284px;top:12px"><i>调试</i>(D)</div>
<div class="t" style="left:338px;top:12px"><i>工具</i>(T)</div>
<div class="t" style="left:392px;top:12px">Deployment</div>
<div class="t" style="left:464px;top:12px"><i>报告</i>(R)</div>
<div class="t" style="left:518px;top:12px"><i>窗口</i>(W)</div>
<div class="t" style="left:572px;top:12px"><i>帮助</i>(H)</div>

<div class="t" style="left:5px;top:90px">Connections</div>
<div class="t" style="left:47px;top:132px">Imported Fixed Users</div>
<div class="t" style="left:47px;top:148px">Imported History</div>
<div class="t" style="left:47px;top:164px">Recent</div>

<div class="t" style="left:6px;top:466px"><i>对象</i></div>
<div class="t" style="left:12px;top:489px"><i>对象</i></div>
<div class="t" style="left:46px;top:489px"><i>文件</i></div>
<div class="t" style="left:7px;top:532px">&lt;<i>当前用户</i>&gt;</div>
<div class="t" style="left:7px;top:557px">All objects</div>
<div class="t" style="left:5px;top:581px">TEST_5</div>

<div id="clip1">
<div class="t" style="left:85px;top:607px">Granted to roles</div>
<div class="t" style="left:65px;top:623px">TEST_5</div>
<div class="t" style="left:85px;top:639px">Columns</div>
<div class="t" style="left:85px;top:655px">Primary key</div>
<div class="t" style="left:85px;top:671px">Unique keys</div>
<div class="t" style="left:85px;top:687px">Foreign keys</div>
<div class="t" style="left:85px;top:703px">Check constraints</div>
<div class="t" style="left:85px;top:719px">Triggers</div>
<div class="t" style="left:85px;top:735px">Indexes</div>
<div class="t" style="left:85px;top:751px">Foreign key references</div>
<div class="t" style="left:85px;top:767px">Referenced by</div>
<div class="t" style="left:85px;top:783px">Synonyms</div>
<div class="t" style="left:85px;top:799px">Granted to users</div>
<div class="t" style="left:85px;top:815px">Granted to roles</div>
<div class="t" style="left:47px;top:831px">Indexes</div>
</div>

<div class="t" style="left:6px;top:848px"><i>窗口列表</i></div>
<div class="t" style="left:12px;top:872px"><i>窗口列表</i></div>
<div class="t" style="left:70px;top:872px"><i>模板</i></div>
<div class="t" style="left:21px;top:894px"><i>创建</i> <i>表</i></div>
<div class="t" style="left:21px;top:916px">SQL <i>窗口</i> - create table TEST_5( id number(2) primary key, name varchar(10)</div>
<div class="t" style="left:21px;top:938px">SQL <i>窗口</i> - <i>查询</i> table TEST_5@V9BAK <i>的数据</i></div>
<div class="t" style="left:21px;top:960px">SQL <i>窗口</i> - <i>查询</i> table TEST_5@V9BAK <i>的数据</i></div>

<div class="t" style="left:476px;top:88px">SQL</div>
<div class="t" style="left:523px;top:92px"><i>输出</i></div>
<div class="t" style="left:571px;top:92px"><i>统计表</i></div>
<div id="ed"><span style="color:#0a8f9e">select</span> <span style="color:#1a1ab0">*</span> <span style="color:#0a8f9e">from</span> TEST_5 t</div>
<svg class="l" width="1810" height="1073" viewBox="0 0 1810 1073" xmlns="http://www.w3.org/2000/svg">
<rect x="784" y="111" width="2" height="28" fill="#000"/>
</svg>
<div class="t" style="left:521px;top:506px;font-size:10px;line-height:13px;font-weight:bold;letter-spacing:0">ID</div>
<div class="t" style="left:556px;top:506px;font-size:10px;line-height:13px;font-weight:bold;letter-spacing:0">NAME</div>
<div id="wm">CSDN @loveforever__</div>

<svg class="l" width="1810" height="1073" viewBox="0 0 1810 1073" xmlns="http://www.w3.org/2000/svg">
<g fill="none" stroke="#ff2318" stroke-width="3.500">
<rect x="468.500" y="92.500" width="359" height="81" rx="4"/>
<rect x="459.500" y="479.500" width="167" height="58" rx="4"/>
<rect x="18.500" y="607.500" width="136" height="37" rx="4"/>
</g>
</svg>
</div></body></html>
